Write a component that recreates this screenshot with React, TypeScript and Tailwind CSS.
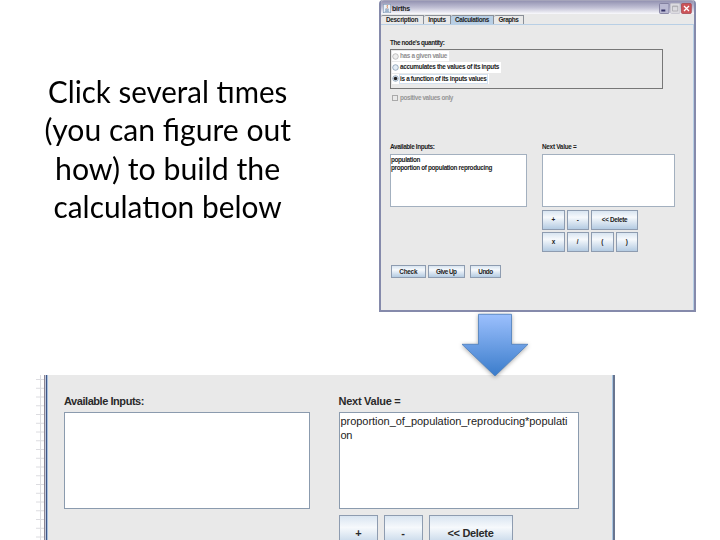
import { useLayoutEffect, useRef, useState, type ReactNode } from "react";

/** One line of text whose tracking is computed so that it spans the given width. */
function Fit({ text, w, className = "" }: { text: string; w: number; className?: string }) {
  const ref = useRef<HTMLSpanElement>(null);
  const [tracking, setTracking] = useState(0);
  useLayoutEffect(() => {
    const el = ref.current;
    if (el) setTracking((w - el.getBoundingClientRect().width) / text.length);
  }, [w, text]);
  return (
    <span ref={ref} style={{ letterSpacing: `${tracking}px` }} className={`block w-max whitespace-pre ${className}`}>
      {text}
    </span>
  );
}

/** One line of the slide's text, condensed to the given width with its ligatures kept. */
function SlideLine({ w, children }: { w: number; children: ReactNode }) {
  const ref = useRef<HTMLSpanElement>(null);
  const [scale, setScale] = useState(1);
  useLayoutEffect(() => {
    if (ref.current) setScale(w / ref.current.offsetWidth);
  }, [w]);
  return (
    <span
      ref={ref}
      style={{ transform: `scaleX(${scale})` }}
      className="block w-max text-[30px] leading-[38.3px] whitespace-pre text-black"
    >
      {children}
    </span>
  );
}

/** "ti" joined by a crossbar, the i without its dot. */
function Ti() {
  return (
    <span className="relative">
      ti
      <span className="absolute top-[5px] right-0 h-[7px] w-[7px] bg-white" />
      <span className="absolute top-[14px] right-[3px] h-[2px] w-[9px] bg-black" />
    </span>
  );
}

const small = "text-[6.4px] leading-[8px] font-bold text-[#222]";
const large = "text-[11px] leading-[14px] font-bold text-[#2a2a2a]";

function Btn({ text, w, className, large: big = false }: { text: string; w: number; className: string; large?: boolean }) {
  return (
    <div
      className={`flex shrink-0 items-center justify-center border border-[#8e9cb0] bg-linear-to-b from-[#d9e5f1] via-[#f6f9fc] via-35% to-[#b4cbe2] ${className}`}
    >
      <Fit text={text} w={w} className={big ? large : small} />
    </div>
  );
}

function Radio({ on = false, dim = false }: { on?: boolean; dim?: boolean }) {
  return (
    <svg viewBox="0 0 8 8" className="size-[7px] shrink-0">
      <circle cx="4" cy="4" r="3.2" fill={dim ? "#eeeeee" : "#e4edf6"} stroke={dim ? "#aaa" : "#7890a8"} strokeWidth=".8" />
      {on && <circle cx="4" cy="4" r="2" fill="#222" />}
    </svg>
  );
}

function Option({ text, w, on, dim, className }: { text: string; w: number; on?: boolean; dim?: boolean; className: string }) {
  return (
    <div className={`flex items-center gap-px bg-white ${className}`}>
      <Radio on={on} dim={dim} />
      <div className={on ? "outline outline-[#d3e0ee]" : ""}>
        <Fit text={text} w={w} className={`text-[6.4px] leading-[8px] font-bold ${dim ? "text-[#909090]" : "text-[#222]"}`} />
      </div>
    </div>
  );
}

function TitleBar() {
  return (
    <div className="flex h-[14px] shrink-0 items-center rounded-t-[3px] border-t border-[#a5a4ba] bg-linear-to-b from-[#9493b2] via-[#c0bfd4] to-[#fafafd] pt-[2px] pr-[2px] pl-[2px]">
      <svg viewBox="0 0 8 9" className="h-[9px] w-[8px] shrink-0">
        <rect x=".3" y=".3" width="7.4" height="8.4" fill="#edf2f8" stroke="#7f98b5" strokeWidth=".6" />
        <path d="M4.6 1C3 2.5 5.5 3 3.8 4.6" stroke="#d4773f" strokeWidth=".9" fill="none" />
        <path d="M2 5.2h4M2.3 6.3h3.4M1.8 7.4h4.4" stroke="#557ba5" strokeWidth=".6" />
      </svg>
      <Fit text="births" w={18} className="ml-[1px] text-[7px] leading-[9px] font-bold text-[#222]" />
      <svg viewBox="0 0 33 11" className="ml-auto h-[11px] w-[33px]">
        <rect x=".5" y=".5" width="9.5" height="10" rx="1" fill="#bab9d2" stroke="#777597" strokeWidth=".8" />
        <rect x="2.3" y="6.5" width="4" height="2" fill="#343267" />
        <rect x="11.5" y=".5" width="9.5" height="10" rx="1" fill="#dcdbe0" stroke="#c3c2cc" strokeWidth=".8" />
        <path d="M13.5 3h5.2v5h-5.2zM13.5 3.6h5.2" fill="none" stroke="#aaa9ae" strokeWidth=".8" />
        <rect x="22.5" y=".5" width="9.8" height="10" rx="1" fill="#cc5358" stroke="#a44850" strokeWidth=".8" />
        <path d="M25 3l5 5M30 3l-5 5" stroke="#fff" strokeWidth="1.3" />
      </svg>
    </div>
  );
}

function Tab({ text, w, className }: { text: string; w: number; className: string }) {
  return (
    <div className={`flex items-center justify-center rounded-tl-[2px] border-t border-r border-[#8b9098] ${className}`}>
      <Fit text={text} w={w} className={small} />
    </div>
  );
}

function BirthsWindow() {
  return (
    <div className="flex h-[312px] w-[317px] shrink-0 flex-col rounded-t-[4px] border-r-2 border-b-2 border-l-2 border-[#858aab] bg-[#e9e9e9]">
      <TitleBar />
      <div className="flex h-[11px] shrink-0 border-b border-[#b8cfe5] pt-px">
        <Tab text="Description" w={32} className="w-[43px]" />
        <Tab text="Inputs" w={17.5} className="w-[27px]" />
        <Tab text="Calculations" w={34} className="w-[43px] bg-[#b8cfe5]" />
        <Tab text="Graphs" w={20} className="w-[30px]" />
      </div>
      <div className="flex grow flex-col border-r border-[#b8cfe5] pt-[14px] pl-[9px]">
        <Fit text="The node's quantity:" w={54.5} className={small} />
        <div className="mt-[2px] flex h-[40px] w-[273px] shrink-0 flex-col gap-[1px] border border-[#777] pt-[1px] pl-[1px]">
          <Option text="has a given value" w={47} dim className="h-[10px] w-[57px]" />
          <Option text="accumulates the values of its inputs" w={99} className="h-[10.5px] w-[109px]" />
          <Option text="is a function of its inputs values" w={86.5} on className="h-[10.5px] w-[97px]" />
        </div>
        <div className="mt-[5px] flex h-[8px] items-center gap-[2px] pl-[2px]">
          <div className="size-[6px] border border-[#aaa]" />
          <Fit text="positive values only" w={53} className="text-[6.4px] leading-[8px] font-bold text-[#969696]" />
        </div>
        <div className="mt-[41px] flex gap-[15px]">
          <div className="w-[137px]">
            <Fit text="Available Inputs:" w={44.5} className={small} />
            <div className="mt-[3px] h-[53px] border border-[#a3b0bf] bg-white pt-[1px]">
              <Fit text="population" w={29} className={small} />
              <Fit text="proportion of population reproducing" w={101} className={small} />
            </div>
          </div>
          <div className="w-[133px]">
            <Fit text="Next Value =" w={34.5} className={small} />
            <div className="mt-[3px] h-[53px] border border-[#a3b0bf] bg-white" />
            <div className="mt-[3px] flex gap-[2px]">
              <Btn text="+" w={3.5} className="h-[20px] w-[22.5px]" />
              <Btn text="-" w={2} className="h-[20px] w-[22.5px]" />
              <Btn text="<< Delete" w={25.5} className="h-[20px] w-[47px]" />
            </div>
            <div className="mt-[2px] flex gap-[2px]">
              <Btn text="x" w={3} className="h-[20px] w-[22.5px]" />
              <Btn text="/" w={2} className="h-[20px] w-[22.5px]" />
              <Btn text="(" w={2} className="h-[20px] w-[22.5px]" />
              <Btn text=")" w={2} className="h-[20px] w-[22.5px]" />
            </div>
          </div>
        </div>
        <div className="mt-[13px] flex pl-[1px]">
          <Btn text="Check" w={18} className="h-[13px] w-[34.5px]" />
          <Btn text="Give Up" w={20.5} className="ml-[2px] h-[13px] w-[37.5px]" />
          <Btn text="Undo" w={14.5} className="ml-[5px] h-[13px] w-[31px]" />
        </div>
      </div>
    </div>
  );
}

function DetailPanel() {
  return (
    <div className="flex h-[165px] shrink-0 pl-[36px]">
      <svg viewBox="0 0 8 165" className="h-[165px] w-[8px]" stroke="#dcdce0" strokeWidth="1">
        <path d="M4.5 0v165" />
        {Array.from({ length: 19 }, (_, i) => (
          <path key={i} d={`M0 ${4.5 + i * 8.75}h8`} />
        ))}
      </svg>
      <div className="w-px bg-[#8c8490]" />
      <div className="w-px bg-[#c3cadb]" />
      <div className="w-px bg-[#3e5688]" />
      <div className="w-px bg-[#a9c0de]" />
      <div className="flex w-[564px] bg-[#e9e9e9] pt-[19px] pl-[16px]">
        <div className="w-[246px] shrink-0">
          <Fit text="Available Inputs:" w={80} className={large} />
          <div className="mt-[4px] h-[97px] border border-[#8b9bae] bg-white" />
        </div>
        <div className="ml-[28.5px] w-[240px] shrink-0">
          <Fit text="Next Value =" w={62} className={large} />
          <div className="mt-[4px] h-[97px] border border-[#8b9bae] bg-white pt-[2px] pl-px">
            <Fit text="proportion_of_population_reproducing*populati" w={227} className="text-[11px] leading-[13px] text-[#222]" />
            <Fit text="on" w={11.5} className="text-[11px] leading-[14px] text-[#222]" />
          </div>
          <div className="mt-[6px] flex h-[25px] gap-[5.5px] overflow-hidden">
            <Btn text="+" w={6} large className="h-[35px] w-[39.5px]" />
            <Btn text="-" w={4} large className="h-[35px] w-[39.5px]" />
            <Btn text="<< Delete" w={46} large className="h-[35px] w-[84px]" />
          </div>
        </div>
      </div>
      <div className="w-px bg-[#a9c6e2]" />
      <div className="w-[1.5px] bg-[#68758f]" />
    </div>
  );
}

export default function App() {
  return (
    <div className="flex h-[540px] w-[720px] flex-col overflow-hidden bg-white font-['Liberation_Sans',Arial,sans-serif]">
      <div className="flex h-[312px] shrink-0">
        <div className="flex w-[379px] shrink-0 flex-col items-center pt-[72px] pr-[43px] font-['Lato',sans-serif]">
          <SlideLine w={239}>
            Click several <Ti />mes
          </SlideLine>
          <SlideLine w={247}>(you can figure out</SlideLine>
          <SlideLine w={225}>how) to build the</SlideLine>
          <SlideLine w={228}>
            calcula<Ti />on below
          </SlideLine>
        </div>
        <BirthsWindow />
      </div>
      <div className="z-10 h-[63px] shrink-0 pl-[458px]">
        <svg viewBox="458 312 74 72" className="h-[72px] w-[74px] drop-shadow-[0_1px_2px_rgba(0,0,0,0.35)]">
          <defs>
            <linearGradient id="arrow" x1="0" y1="0" x2="0" y2="1">
              <stop offset="0" stopColor="#9cc0fd" />
              <stop offset="1" stopColor="#3a7ccb" />
            </linearGradient>
          </defs>
          <path d="M478.5 314.3h33v30H528L495 376 462 344.3h16.5z" fill="url(#arrow)" stroke="#4d7fbd" strokeWidth=".8" />
        </svg>
      </div>
      <DetailPanel />
    </div>
  );
}
